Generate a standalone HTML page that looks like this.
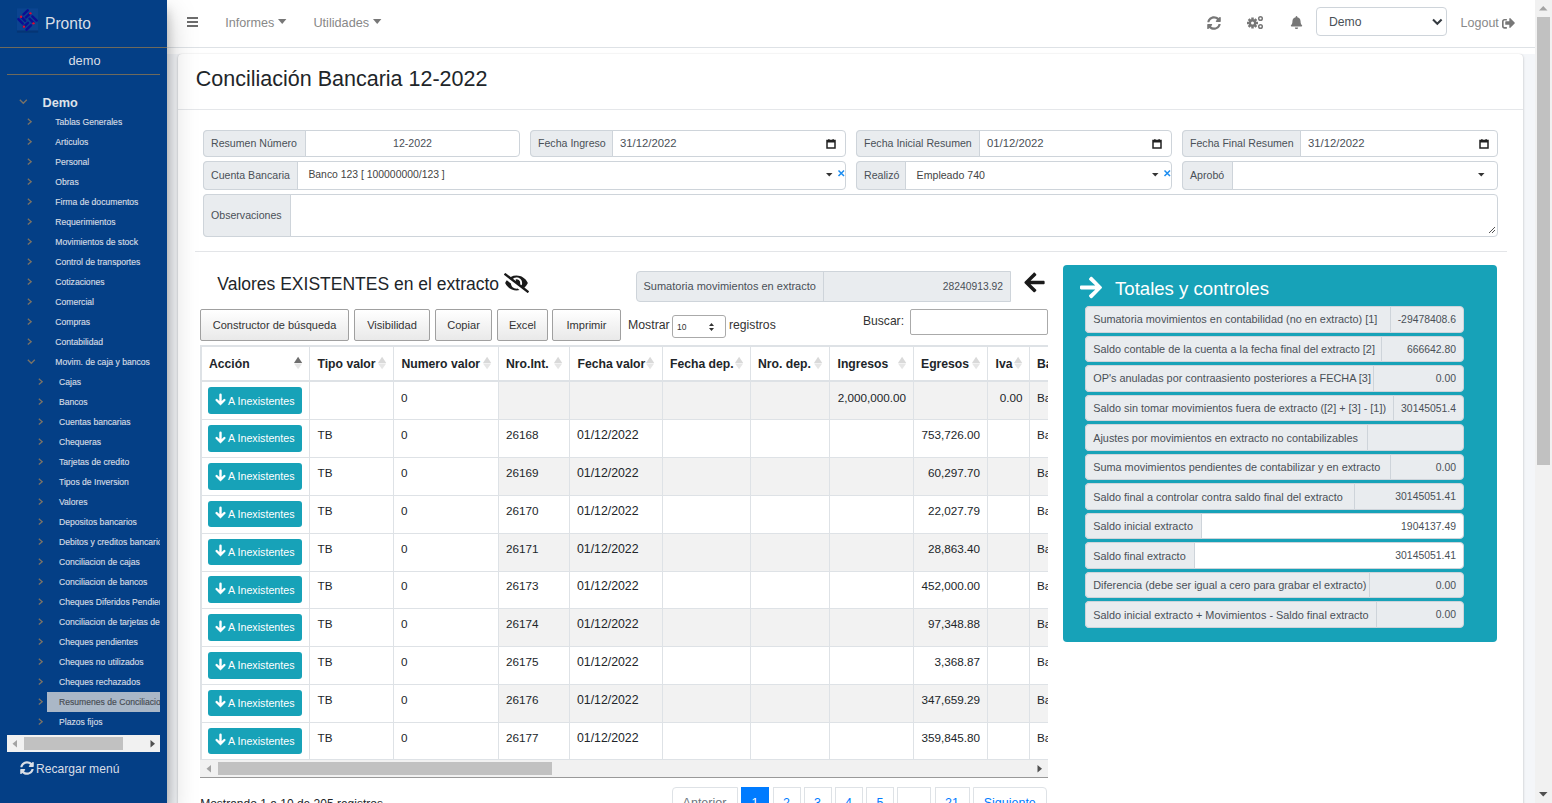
<!DOCTYPE html>
<html><head><meta charset="utf-8"><title>Conciliación Bancaria</title>
<style>
html,body{margin:0;padding:0;}
body{width:1552px;height:803px;overflow:hidden;position:relative;background:#f4f6f9;font-family:"Liberation Sans",sans-serif;}
.t{position:absolute;white-space:nowrap;}
.r{position:absolute;box-sizing:border-box;}
svg{position:absolute;overflow:visible;}
</style></head><body>

<div class="r" style="left:167px;top:0px;width:1368px;height:803px;background:#f4f6f9;"></div>
<div class="r" style="left:167px;top:0px;width:1368px;height:54px;background:#fff;"></div>
<div class="r" style="left:178px;top:54px;width:1345px;height:776px;background:#fff;border-radius:4px;box-shadow:0 0 1px rgba(0,0,0,.13),0 1px 3px rgba(0,0,0,.2);"></div>
<div class="r" style="left:178px;top:109px;width:1345px;height:1px;background:#e5e7ea;"></div>
<div class="r" style="left:167px;top:0px;width:1368px;height:48px;background:#fff;border-bottom:1px solid #dee2e6;"></div>
<div class="r" style="left:187px;top:17px;width:11px;height:2px;background:#6d6d6d;"></div>
<div class="r" style="left:187px;top:21px;width:11px;height:2px;background:#6d6d6d;"></div>
<div class="r" style="left:187px;top:25px;width:11px;height:2px;background:#6d6d6d;"></div>
<div class="t" style="top:12.54px;font-size:12.6px;line-height:20px;color:#888;left:225.30px;">Informes</div>
<svg style="left:278px;top:19px" width="9" height="6"><path d="M0 0H8.4L4.2 5z" fill="#777"/></svg>
<div class="t" style="top:12.55px;font-size:12.7px;line-height:20px;color:#888;left:313.40px;">Utilidades</div>
<svg style="left:373px;top:19px" width="9" height="6"><path d="M0 0H8.4L4.2 5z" fill="#777"/></svg>
<svg style="left:1207px;top:15.5px" width="14" height="14" viewBox="0 0 512 512"><path fill="#777" d="M370.72 133.28C339.458 104.008 298.888 87.962 255.848 88c-77.458.068-144.328 53.178-162.791 126.85-1.344 5.363-6.122 9.15-11.651 9.15H24.103c-7.498 0-13.194-6.807-11.807-14.176C33.933 94.924 134.813 8 256 8c66.448 0 126.791 26.136 171.315 68.685L463.03 40.97C478.149 25.851 504 36.559 504 57.941V192c0 13.255-10.745 24-24 24H345.941c-21.382 0-32.09-25.851-16.971-40.971l41.75-41.749zM32 296h134.059c21.382 0 32.09 25.851 16.971 40.971l-41.75 41.75c31.262 29.273 71.835 45.319 114.876 45.28 77.418-.07 144.315-53.144 162.787-126.849 1.344-5.363 6.122-9.15 11.651-9.15h57.304c7.498 0 13.194 6.807 11.807 14.176C478.067 417.076 377.187 504 256 504c-66.448 0-126.791-26.136-171.315-68.685L48.97 471.03C33.851 486.149 8 475.441 8 454.059V320c0-13.255 10.745-24 24-24z"/></svg>
<svg style="left:1247px;top:16px" width="17" height="13" viewBox="0 0 34 26"><g fill="#777"><circle cx="11" cy="14" r="7.5"/><g transform="translate(11 14)"><rect x="-2.5" y="-11" width="5" height="22"/><rect x="-2.5" y="-11" width="5" height="22" transform="rotate(45)"/><rect x="-2.5" y="-11" width="5" height="22" transform="rotate(90)"/><rect x="-2.5" y="-11" width="5" height="22" transform="rotate(135)"/></g></g><circle cx="11" cy="14" r="3" fill="#fff"/><circle cx="27" cy="5" r="3.6" fill="none" stroke="#777" stroke-width="3"/><circle cx="27" cy="21" r="3.6" fill="none" stroke="#777" stroke-width="3"/></svg>
<svg style="left:1290px;top:16px" width="13" height="13" viewBox="0 0 448 512"><path fill="#777" d="M224 512c35.32 0 63.97-28.65 63.97-64H160.03c0 35.35 28.65 64 63.97 64zm215.39-149.71c-19.32-20.76-55.47-51.99-55.47-154.29 0-77.7-54.48-139.9-127.94-155.16V32c0-17.67-14.32-32-31.98-32s-31.98 14.33-31.98 32v20.84C118.56 68.1 64.08 130.3 64.08 208c0 102.3-36.15 133.53-55.47 154.29-6 6.45-8.66 14.16-8.61 21.71.11 16.4 12.98 32 32.1 32h383.8c19.12 0 32-15.6 32.1-32 .05-7.55-2.61-15.27-8.61-21.71z"/></svg>
<div class="r" style="left:1316px;top:7px;width:131px;height:29px;background:#fff;border:1px solid #ced4da;border-radius:4px;"></div>
<div class="t" style="top:11.64px;font-size:12.2px;line-height:20px;color:#495057;left:1329.00px;">Demo</div>
<svg style="left:1432px;top:18px" width="11" height="8"><path d="M1 1.5L5.3 5.8L9.6 1.5" fill="none" stroke="#343a40" stroke-width="2"/></svg>
<div class="t" style="top:12.64px;font-size:12.5px;line-height:20px;color:#888;left:1460.60px;">Logout</div>
<svg style="left:1502px;top:16.5px" width="13" height="12" viewBox="0 0 512 448"><path fill="#777" d="M497 241L329 409c-15 15-41 4.5-41-17v-96H152c-13.3 0-24-10.7-24-24v-96c0-13.3 10.7-24 24-24h136V56c0-21.4 25.9-32 41-17l168 168c9.3 9.4 9.3 24.6 0 34zM192 436v-40c0-6.6-5.4-12-12-12H96c-17.7 0-32-14.3-32-32V160c0-17.7 14.3-32 32-32h84c6.6 0 12-5.4 12-12V76c0-6.6-5.4-12-12-12H96c-53 0-96 43-96 96v192c0 53 43 96 96 96h84c6.6 0 12-5.4 12-12z"/></svg>
<div class="t" style="top:69.35px;font-size:21.5px;line-height:20px;color:#212529;left:195.80px;">Conciliación Bancaria 12-2022</div>
<div class="r" style="left:203px;top:130px;width:317px;height:27px;background:#fff;border:1px solid #ced4da;border-radius:4px;"></div>
<div class="r" style="left:203px;top:130px;width:103px;height:27px;background:#e9ecef;border:1px solid #ced4da;border-radius:4px 0 0 4px;"></div>
<div class="t" style="top:132.62px;font-size:10.6px;line-height:20px;color:#495057;left:211.00px;">Resumen Número</div>
<div class="t" style="top:132.62px;font-size:10.6px;line-height:20px;color:#495057;left:212.50px;width:400px;text-align:center;">12-2022</div>
<div class="r" style="left:530px;top:130px;width:316px;height:27px;background:#fff;border:1px solid #ced4da;border-radius:4px;"></div>
<div class="r" style="left:530px;top:130px;width:83px;height:27px;background:#e9ecef;border:1px solid #ced4da;border-radius:4px 0 0 4px;"></div>
<div class="t" style="top:132.62px;font-size:10.6px;line-height:20px;color:#495057;left:538.00px;">Fecha Ingreso</div>
<div class="t" style="top:132.63px;font-size:11.3px;line-height:20px;color:#495057;left:620.00px;">31/12/2022</div>
<svg style="left:826px;top:138.5px" width="10" height="10" viewBox="0 0 10 10"><path d="M1 1.5h8v7.5h-8z" fill="none" stroke="#222" stroke-width="1.5"/><rect x="1" y="1" width="8" height="2.5" fill="#222"/><rect x="2.3" y="0" width="1.2" height="2" fill="#222"/><rect x="6.5" y="0" width="1.2" height="2" fill="#222"/></svg>
<div class="r" style="left:856px;top:130px;width:316px;height:27px;background:#fff;border:1px solid #ced4da;border-radius:4px;"></div>
<div class="r" style="left:856px;top:130px;width:124px;height:27px;background:#e9ecef;border:1px solid #ced4da;border-radius:4px 0 0 4px;"></div>
<div class="t" style="top:132.62px;font-size:10.6px;line-height:20px;color:#495057;left:864.00px;">Fecha Inicial Resumen</div>
<div class="t" style="top:132.63px;font-size:11.3px;line-height:20px;color:#495057;left:987.00px;">01/12/2022</div>
<svg style="left:1152px;top:138.5px" width="10" height="10" viewBox="0 0 10 10"><path d="M1 1.5h8v7.5h-8z" fill="none" stroke="#222" stroke-width="1.5"/><rect x="1" y="1" width="8" height="2.5" fill="#222"/><rect x="2.3" y="0" width="1.2" height="2" fill="#222"/><rect x="6.5" y="0" width="1.2" height="2" fill="#222"/></svg>
<div class="r" style="left:1182px;top:130px;width:316px;height:27px;background:#fff;border:1px solid #ced4da;border-radius:4px;"></div>
<div class="r" style="left:1182px;top:130px;width:119px;height:27px;background:#e9ecef;border:1px solid #ced4da;border-radius:4px 0 0 4px;"></div>
<div class="t" style="top:132.62px;font-size:10.6px;line-height:20px;color:#495057;left:1190.00px;">Fecha Final Resumen</div>
<div class="t" style="top:132.63px;font-size:11.3px;line-height:20px;color:#495057;left:1308.00px;">31/12/2022</div>
<svg style="left:1479px;top:138.5px" width="10" height="10" viewBox="0 0 10 10"><path d="M1 1.5h8v7.5h-8z" fill="none" stroke="#222" stroke-width="1.5"/><rect x="1" y="1" width="8" height="2.5" fill="#222"/><rect x="2.3" y="0" width="1.2" height="2" fill="#222"/><rect x="6.5" y="0" width="1.2" height="2" fill="#222"/></svg>
<div class="r" style="left:203px;top:161px;width:643px;height:29px;background:#fff;border:1px solid #ced4da;border-radius:4px;"></div>
<div class="r" style="left:203px;top:161px;width:95px;height:29px;background:#e9ecef;border:1px solid #ced4da;border-radius:4px 0 0 4px;"></div>
<div class="t" style="top:164.62px;font-size:10.6px;line-height:20px;color:#495057;left:211.00px;">Cuenta Bancaria</div>
<div class="t" style="top:164.62px;font-size:10.4px;line-height:20px;color:#444;left:308.40px;">Banco 123 [ 100000000/123 ]</div>
<svg style="left:826px;top:173px" width="7" height="4"><path d="M0 0H6.5L3.25 3.5z" fill="#333"/></svg>
<svg style="left:837.5px;top:170px" width="7" height="7"><path d="M.5 .5L6 6M6 .5L.5 6" stroke="#1a8cf0" stroke-width="1.5"/></svg>
<div class="r" style="left:856px;top:161px;width:316px;height:29px;background:#fff;border:1px solid #ced4da;border-radius:4px;"></div>
<div class="r" style="left:856px;top:161px;width:50px;height:29px;background:#e9ecef;border:1px solid #ced4da;border-radius:4px 0 0 4px;"></div>
<div class="t" style="top:164.62px;font-size:10.6px;line-height:20px;color:#495057;left:864.00px;">Realizó</div>
<div class="t" style="top:164.62px;font-size:10.6px;line-height:20px;color:#444;left:916.60px;">Empleado 740</div>
<svg style="left:1152px;top:173px" width="7" height="4"><path d="M0 0H6.5L3.25 3.5z" fill="#333"/></svg>
<svg style="left:1163.5px;top:170px" width="7" height="7"><path d="M.5 .5L6 6M6 .5L.5 6" stroke="#1a8cf0" stroke-width="1.5"/></svg>
<div class="r" style="left:1182px;top:161px;width:316px;height:29px;background:#fff;border:1px solid #ced4da;border-radius:4px;"></div>
<div class="r" style="left:1182px;top:161px;width:51px;height:29px;background:#e9ecef;border:1px solid #ced4da;border-radius:4px 0 0 4px;"></div>
<div class="t" style="top:164.62px;font-size:10.6px;line-height:20px;color:#495057;left:1190.00px;">Aprobó</div>
<svg style="left:1478px;top:173px" width="7" height="4"><path d="M0 0H6.5L3.25 3.5z" fill="#333"/></svg>
<div class="r" style="left:203px;top:194px;width:1295px;height:43px;background:#fff;border:1px solid #ced4da;border-radius:4px;"></div>
<div class="r" style="left:203px;top:194px;width:88px;height:43px;background:#e9ecef;border:1px solid #ced4da;border-radius:4px 0 0 4px;"></div>
<div class="t" style="top:204.62px;font-size:10.6px;line-height:20px;color:#495057;left:211.00px;">Observaciones</div>
<svg style="left:1488px;top:226px" width="8" height="8"><path d="M1 7L7 1M4 7L7 4" stroke="#555" stroke-width="1"/></svg>
<div class="r" style="left:195px;top:251px;width:1312px;height:1px;background:#e3e5e8;"></div>
<div class="t" style="top:273.60px;font-size:17.5px;line-height:20px;color:#212529;left:217.30px;">Valores EXISTENTES en el extracto</div>
<svg style="left:504px;top:272.6px" width="25" height="20" viewBox="0 0 640 512"><path fill="#1a1a1a" d="M320 400c-75.85 0-137.25-58.71-142.9-133.11L72.2 185.82c-13.79 17.3-26.48 35.59-36.72 55.59a32.35 32.35 0 0 0 0 29.19C89.71 376.41 197.07 448 320 448c26.91 0 52.87-4 77.89-10.46L346 397.39a144.13 144.13 0 0 1-26 2.61zm313.82 58.1l-110.55-85.44a331.25 331.25 0 0 0 81.25-102.07 32.35 32.35 0 0 0 0-29.19C550.29 135.59 442.93 64 320 64a308.15 308.15 0 0 0-147.32 37.7L45.46 3.37A16 16 0 0 0 23 6.18L3.37 31.45A16 16 0 0 0 6.18 53.9l588.36 454.73a16 16 0 0 0 22.46-2.81l19.64-25.27a16 16 0 0 0-2.82-22.45zm-183.72-142l-39.3-30.38A94.75 94.75 0 0 0 416 256a94.76 94.76 0 0 0-121.31-92.21A47.65 47.65 0 0 1 304 192a46.64 46.64 0 0 1-1.54 10l-73.61-56.89A142.31 142.31 0 0 1 320 112a143.92 143.92 0 0 1 144 144c0 21.63-5.29 41.79-13.9 60.11z"/></svg>
<div class="r" style="left:636px;top:271px;width:375px;height:31px;background:#e9ecef;border:1px solid #ced4da;border-radius:4px 0 0 4px;"></div>
<div class="r" style="left:823px;top:271px;width:1px;height:31px;background:#ced4da;"></div>
<div class="t" style="top:275.63px;font-size:11.0px;line-height:20px;color:#495057;left:643.50px;">Sumatoria movimientos en extracto</div>
<div class="t" style="top:276.62px;font-size:10.3px;line-height:20px;color:#495057;right:549.00px;text-align:right;">28240913.92</div>
<svg style="left:1024px;top:273px" width="21" height="19" viewBox="0 0 448 420"><path fill="#1a1a1a" d="M257.5 421.9l-22.2 22.2c-9.4 9.4-24.6 9.4-33.9 0L7 250.8c-9.4-9.4-9.4-24.6 0-33.9L201.4 22.4c9.4-9.4 24.6-9.4 33.9 0l22.2 22.2c9.5 9.5 9.3 25-.4 34.3L136.6 193.6H424c13.3 0 24 10.7 24 24v32c0 13.3-10.7 24-24 24H136.6l120.5 114.8c9.8 9.3 10 24.8.4 34.3z" transform="translate(0,-24)"/></svg>
<div class="r" style="left:200px;top:309px;width:149px;height:32px;background:linear-gradient(#fff,#e9e9e9);border:1px solid #a0a0a0;border-radius:2px;"></div>
<div class="t" style="top:315.13px;font-size:11.0px;line-height:20px;color:#333;left:74.50px;width:400px;text-align:center;">Constructor de búsqueda</div>
<div class="r" style="left:354px;top:309px;width:76px;height:32px;background:linear-gradient(#fff,#e9e9e9);border:1px solid #a0a0a0;border-radius:2px;"></div>
<div class="t" style="top:315.13px;font-size:11.1px;line-height:20px;color:#333;left:192.00px;width:400px;text-align:center;">Visibilidad</div>
<div class="r" style="left:435px;top:309px;width:57px;height:32px;background:linear-gradient(#fff,#e9e9e9);border:1px solid #a0a0a0;border-radius:2px;"></div>
<div class="t" style="top:315.13px;font-size:11.1px;line-height:20px;color:#333;left:263.50px;width:400px;text-align:center;">Copiar</div>
<div class="r" style="left:497px;top:309px;width:51px;height:32px;background:linear-gradient(#fff,#e9e9e9);border:1px solid #a0a0a0;border-radius:2px;"></div>
<div class="t" style="top:315.13px;font-size:11.1px;line-height:20px;color:#333;left:322.50px;width:400px;text-align:center;">Excel</div>
<div class="r" style="left:552px;top:309px;width:69px;height:32px;background:linear-gradient(#fff,#e9e9e9);border:1px solid #a0a0a0;border-radius:2px;"></div>
<div class="t" style="top:315.13px;font-size:11.1px;line-height:20px;color:#333;left:386.50px;width:400px;text-align:center;">Imprimir</div>
<div class="t" style="top:315.14px;font-size:12.3px;line-height:20px;color:#333;left:628.00px;">Mostrar</div>
<div class="r" style="left:672px;top:315px;width:54px;height:23px;background:#fff;border:1px solid #aaa;border-radius:3px;"></div>
<div class="t" style="top:317.10px;font-size:8.5px;line-height:20px;color:#333;left:677.00px;">10</div>
<svg style="left:709px;top:323px" width="5" height="9"><path d="M0 3L2.5 0L5 3zM0 5L2.5 8L5 5z" fill="#333"/></svg>
<div class="t" style="top:315.14px;font-size:12.2px;line-height:20px;color:#333;left:729.00px;">registros</div>
<div class="t" style="top:311.14px;font-size:12.1px;line-height:20px;color:#333;left:863.00px;">Buscar:</div>
<div class="r" style="left:910px;top:309px;width:138px;height:26px;background:#fff;border:1px solid #aaa;border-radius:2px;"></div>
<div style="position:absolute;left:200px;top:345px;width:848px;height:433px;overflow:hidden;">
<div class="r" style="left:0.00px;top:0.00px;width:900.00px;height:37.00px;background:#fff;"></div>
<div class="r" style="left:0.00px;top:0.00px;width:900.00px;height:2.00px;background:#dee2e6;"></div>
<div class="r" style="left:0.00px;top:35.00px;width:900.00px;height:2.00px;background:#dee2e6;"></div>
<div class="t" style="top:8.64px;font-size:12.2px;line-height:20px;color:#212529;font-weight:bold;left:9.00px;">Acción</div>
<svg style="left:94px;top:11px" width="9" height="14"><path d="M0 6.9L4.1 .8L8.2 6.9z" fill="#6e6e6e"/><path d="M0 7.4L8.2 7.4L4.1 13.3z" fill="#e6e6e6"/></svg>
<div class="t" style="top:8.64px;font-size:12.2px;line-height:20px;color:#212529;font-weight:bold;left:117.50px;">Tipo valor</div>
<svg style="left:178px;top:11px" width="9" height="14"><path d="M0 6.9L4.1 .8L8.2 6.9z" fill="#d9d9d9"/><path d="M0 7.4L8.2 7.4L4.1 13.3z" fill="#e6e6e6"/></svg>
<div class="t" style="top:8.64px;font-size:12.2px;line-height:20px;color:#212529;font-weight:bold;left:201.50px;">Numero valor</div>
<svg style="left:283px;top:11px" width="9" height="14"><path d="M0 6.9L4.1 .8L8.2 6.9z" fill="#d9d9d9"/><path d="M0 7.4L8.2 7.4L4.1 13.3z" fill="#e6e6e6"/></svg>
<div class="t" style="top:8.64px;font-size:12.2px;line-height:20px;color:#212529;font-weight:bold;left:306.00px;">Nro.Int.</div>
<svg style="left:354px;top:11px" width="9" height="14"><path d="M0 6.9L4.1 .8L8.2 6.9z" fill="#d9d9d9"/><path d="M0 7.4L8.2 7.4L4.1 13.3z" fill="#e6e6e6"/></svg>
<div class="t" style="top:8.64px;font-size:12.2px;line-height:20px;color:#212529;font-weight:bold;left:377.50px;">Fecha valor</div>
<svg style="left:446px;top:11px" width="9" height="14"><path d="M0 6.9L4.1 .8L8.2 6.9z" fill="#d9d9d9"/><path d="M0 7.4L8.2 7.4L4.1 13.3z" fill="#e6e6e6"/></svg>
<div class="t" style="top:8.64px;font-size:12.2px;line-height:20px;color:#212529;font-weight:bold;left:470.00px;">Fecha dep.</div>
<svg style="left:535px;top:11px" width="9" height="14"><path d="M0 6.9L4.1 .8L8.2 6.9z" fill="#d9d9d9"/><path d="M0 7.4L8.2 7.4L4.1 13.3z" fill="#e6e6e6"/></svg>
<div class="t" style="top:8.64px;font-size:12.2px;line-height:20px;color:#212529;font-weight:bold;left:558.00px;">Nro. dep.</div>
<svg style="left:614px;top:11px" width="9" height="14"><path d="M0 6.9L4.1 .8L8.2 6.9z" fill="#d9d9d9"/><path d="M0 7.4L8.2 7.4L4.1 13.3z" fill="#e6e6e6"/></svg>
<div class="t" style="top:8.64px;font-size:12.2px;line-height:20px;color:#212529;font-weight:bold;left:637.50px;">Ingresos</div>
<svg style="left:698px;top:11px" width="9" height="14"><path d="M0 6.9L4.1 .8L8.2 6.9z" fill="#d9d9d9"/><path d="M0 7.4L8.2 7.4L4.1 13.3z" fill="#e6e6e6"/></svg>
<div class="t" style="top:8.64px;font-size:12.2px;line-height:20px;color:#212529;font-weight:bold;left:721.00px;">Egresos</div>
<svg style="left:771.5px;top:11px" width="9" height="14"><path d="M0 6.9L4.1 .8L8.2 6.9z" fill="#d9d9d9"/><path d="M0 7.4L8.2 7.4L4.1 13.3z" fill="#e6e6e6"/></svg>
<div class="t" style="top:8.64px;font-size:12.2px;line-height:20px;color:#212529;font-weight:bold;left:795.50px;">Iva</div>
<svg style="left:814px;top:11px" width="9" height="14"><path d="M0 6.9L4.1 .8L8.2 6.9z" fill="#d9d9d9"/><path d="M0 7.4L8.2 7.4L4.1 13.3z" fill="#e6e6e6"/></svg>
<div class="t" style="top:8.64px;font-size:12.2px;line-height:20px;color:#212529;font-weight:bold;left:837.00px;">Banco</div>
<div class="r" style="left:0.00px;top:37.00px;width:900.00px;height:37.80px;background:#fff;"></div>
<div class="r" style="left:298.00px;top:37.00px;width:602.00px;height:37.80px;background:#f2f2f2;"></div>
<div class="r" style="left:8.00px;top:42.30px;width:94.00px;height:26.70px;background:#17a2b8;border-radius:3px;"></div>
<svg style="left:15px;top:49.00px" width="11" height="12" viewBox="0 0 11 12"><path d="M5.5 .8V9.8M1.6 6L5.5 9.9L9.4 6" fill="none" stroke="#fff" stroke-width="2.4" stroke-linecap="round" stroke-linejoin="miter"/></svg>
<div class="t" style="top:45.62px;font-size:10.7px;line-height:20px;color:#fff;left:28.00px;">A Inexistentes</div>
<div class="t" style="top:43.13px;font-size:11.7px;line-height:20px;color:#212529;left:201.00px;">0</div>
<div class="t" style="top:43.13px;font-size:11.7px;line-height:20px;color:#212529;left:406.00px;width:300px;text-align:right;">2,000,000.00</div>
<div class="t" style="top:43.13px;font-size:11.7px;line-height:20px;color:#212529;left:522.50px;width:300px;text-align:right;">0.00</div>
<div class="t" style="top:43.13px;font-size:11.7px;line-height:20px;color:#212529;left:837.00px;">Banco</div>
<div class="r" style="left:0.00px;top:74.80px;width:900.00px;height:37.80px;background:#fff;"></div>
<div class="r" style="left:0.00px;top:74.30px;width:900.00px;height:1.00px;background:#dee2e6;"></div>
<div class="r" style="left:8.00px;top:80.10px;width:94.00px;height:26.70px;background:#17a2b8;border-radius:3px;"></div>
<svg style="left:15px;top:86.80px" width="11" height="12" viewBox="0 0 11 12"><path d="M5.5 .8V9.8M1.6 6L5.5 9.9L9.4 6" fill="none" stroke="#fff" stroke-width="2.4" stroke-linecap="round" stroke-linejoin="miter"/></svg>
<div class="t" style="top:83.42px;font-size:10.7px;line-height:20px;color:#fff;left:28.00px;">A Inexistentes</div>
<div class="t" style="top:80.23px;font-size:11.7px;line-height:20px;color:#212529;left:117.50px;">TB</div>
<div class="t" style="top:80.23px;font-size:11.7px;line-height:20px;color:#212529;left:201.00px;">0</div>
<div class="t" style="top:80.23px;font-size:11.7px;line-height:20px;color:#212529;left:306.00px;">26168</div>
<div class="t" style="top:80.24px;font-size:12.3px;line-height:20px;color:#212529;left:377.00px;">01/12/2022</div>
<div class="t" style="top:80.23px;font-size:11.7px;line-height:20px;color:#212529;left:480.00px;width:300px;text-align:right;">753,726.00</div>
<div class="t" style="top:80.23px;font-size:11.7px;line-height:20px;color:#212529;left:837.00px;">Banco</div>
<div class="r" style="left:0.00px;top:112.60px;width:900.00px;height:37.80px;background:#fff;"></div>
<div class="r" style="left:298.00px;top:112.60px;width:602.00px;height:37.80px;background:#f2f2f2;"></div>
<div class="r" style="left:0.00px;top:112.10px;width:900.00px;height:1.00px;background:#dee2e6;"></div>
<div class="r" style="left:8.00px;top:117.90px;width:94.00px;height:26.70px;background:#17a2b8;border-radius:3px;"></div>
<svg style="left:15px;top:124.60px" width="11" height="12" viewBox="0 0 11 12"><path d="M5.5 .8V9.8M1.6 6L5.5 9.9L9.4 6" fill="none" stroke="#fff" stroke-width="2.4" stroke-linecap="round" stroke-linejoin="miter"/></svg>
<div class="t" style="top:121.22px;font-size:10.7px;line-height:20px;color:#fff;left:28.00px;">A Inexistentes</div>
<div class="t" style="top:118.03px;font-size:11.7px;line-height:20px;color:#212529;left:117.50px;">TB</div>
<div class="t" style="top:118.03px;font-size:11.7px;line-height:20px;color:#212529;left:201.00px;">0</div>
<div class="t" style="top:118.03px;font-size:11.7px;line-height:20px;color:#212529;left:306.00px;">26169</div>
<div class="t" style="top:118.04px;font-size:12.3px;line-height:20px;color:#212529;left:377.00px;">01/12/2022</div>
<div class="t" style="top:118.03px;font-size:11.7px;line-height:20px;color:#212529;left:480.00px;width:300px;text-align:right;">60,297.70</div>
<div class="t" style="top:118.03px;font-size:11.7px;line-height:20px;color:#212529;left:837.00px;">Banco</div>
<div class="r" style="left:0.00px;top:150.40px;width:900.00px;height:37.80px;background:#fff;"></div>
<div class="r" style="left:0.00px;top:149.90px;width:900.00px;height:1.00px;background:#dee2e6;"></div>
<div class="r" style="left:8.00px;top:155.70px;width:94.00px;height:26.70px;background:#17a2b8;border-radius:3px;"></div>
<svg style="left:15px;top:162.40px" width="11" height="12" viewBox="0 0 11 12"><path d="M5.5 .8V9.8M1.6 6L5.5 9.9L9.4 6" fill="none" stroke="#fff" stroke-width="2.4" stroke-linecap="round" stroke-linejoin="miter"/></svg>
<div class="t" style="top:159.02px;font-size:10.7px;line-height:20px;color:#fff;left:28.00px;">A Inexistentes</div>
<div class="t" style="top:155.83px;font-size:11.7px;line-height:20px;color:#212529;left:117.50px;">TB</div>
<div class="t" style="top:155.83px;font-size:11.7px;line-height:20px;color:#212529;left:201.00px;">0</div>
<div class="t" style="top:155.83px;font-size:11.7px;line-height:20px;color:#212529;left:306.00px;">26170</div>
<div class="t" style="top:155.84px;font-size:12.3px;line-height:20px;color:#212529;left:377.00px;">01/12/2022</div>
<div class="t" style="top:155.83px;font-size:11.7px;line-height:20px;color:#212529;left:480.00px;width:300px;text-align:right;">22,027.79</div>
<div class="t" style="top:155.83px;font-size:11.7px;line-height:20px;color:#212529;left:837.00px;">Banco</div>
<div class="r" style="left:0.00px;top:188.20px;width:900.00px;height:37.80px;background:#fff;"></div>
<div class="r" style="left:298.00px;top:188.20px;width:602.00px;height:37.80px;background:#f2f2f2;"></div>
<div class="r" style="left:0.00px;top:187.70px;width:900.00px;height:1.00px;background:#dee2e6;"></div>
<div class="r" style="left:8.00px;top:193.50px;width:94.00px;height:26.70px;background:#17a2b8;border-radius:3px;"></div>
<svg style="left:15px;top:200.20px" width="11" height="12" viewBox="0 0 11 12"><path d="M5.5 .8V9.8M1.6 6L5.5 9.9L9.4 6" fill="none" stroke="#fff" stroke-width="2.4" stroke-linecap="round" stroke-linejoin="miter"/></svg>
<div class="t" style="top:196.82px;font-size:10.7px;line-height:20px;color:#fff;left:28.00px;">A Inexistentes</div>
<div class="t" style="top:193.63px;font-size:11.7px;line-height:20px;color:#212529;left:117.50px;">TB</div>
<div class="t" style="top:193.63px;font-size:11.7px;line-height:20px;color:#212529;left:201.00px;">0</div>
<div class="t" style="top:193.63px;font-size:11.7px;line-height:20px;color:#212529;left:306.00px;">26171</div>
<div class="t" style="top:193.64px;font-size:12.3px;line-height:20px;color:#212529;left:377.00px;">01/12/2022</div>
<div class="t" style="top:193.63px;font-size:11.7px;line-height:20px;color:#212529;left:480.00px;width:300px;text-align:right;">28,863.40</div>
<div class="t" style="top:193.63px;font-size:11.7px;line-height:20px;color:#212529;left:837.00px;">Banco</div>
<div class="r" style="left:0.00px;top:226.00px;width:900.00px;height:37.80px;background:#fff;"></div>
<div class="r" style="left:0.00px;top:225.50px;width:900.00px;height:1.00px;background:#dee2e6;"></div>
<div class="r" style="left:8.00px;top:231.30px;width:94.00px;height:26.70px;background:#17a2b8;border-radius:3px;"></div>
<svg style="left:15px;top:238.00px" width="11" height="12" viewBox="0 0 11 12"><path d="M5.5 .8V9.8M1.6 6L5.5 9.9L9.4 6" fill="none" stroke="#fff" stroke-width="2.4" stroke-linecap="round" stroke-linejoin="miter"/></svg>
<div class="t" style="top:234.62px;font-size:10.7px;line-height:20px;color:#fff;left:28.00px;">A Inexistentes</div>
<div class="t" style="top:231.43px;font-size:11.7px;line-height:20px;color:#212529;left:117.50px;">TB</div>
<div class="t" style="top:231.43px;font-size:11.7px;line-height:20px;color:#212529;left:201.00px;">0</div>
<div class="t" style="top:231.43px;font-size:11.7px;line-height:20px;color:#212529;left:306.00px;">26173</div>
<div class="t" style="top:231.44px;font-size:12.3px;line-height:20px;color:#212529;left:377.00px;">01/12/2022</div>
<div class="t" style="top:231.43px;font-size:11.7px;line-height:20px;color:#212529;left:480.00px;width:300px;text-align:right;">452,000.00</div>
<div class="t" style="top:231.43px;font-size:11.7px;line-height:20px;color:#212529;left:837.00px;">Banco</div>
<div class="r" style="left:0.00px;top:263.80px;width:900.00px;height:37.80px;background:#fff;"></div>
<div class="r" style="left:298.00px;top:263.80px;width:602.00px;height:37.80px;background:#f2f2f2;"></div>
<div class="r" style="left:0.00px;top:263.30px;width:900.00px;height:1.00px;background:#dee2e6;"></div>
<div class="r" style="left:8.00px;top:269.10px;width:94.00px;height:26.70px;background:#17a2b8;border-radius:3px;"></div>
<svg style="left:15px;top:275.80px" width="11" height="12" viewBox="0 0 11 12"><path d="M5.5 .8V9.8M1.6 6L5.5 9.9L9.4 6" fill="none" stroke="#fff" stroke-width="2.4" stroke-linecap="round" stroke-linejoin="miter"/></svg>
<div class="t" style="top:272.42px;font-size:10.7px;line-height:20px;color:#fff;left:28.00px;">A Inexistentes</div>
<div class="t" style="top:269.23px;font-size:11.7px;line-height:20px;color:#212529;left:117.50px;">TB</div>
<div class="t" style="top:269.23px;font-size:11.7px;line-height:20px;color:#212529;left:201.00px;">0</div>
<div class="t" style="top:269.23px;font-size:11.7px;line-height:20px;color:#212529;left:306.00px;">26174</div>
<div class="t" style="top:269.24px;font-size:12.3px;line-height:20px;color:#212529;left:377.00px;">01/12/2022</div>
<div class="t" style="top:269.23px;font-size:11.7px;line-height:20px;color:#212529;left:480.00px;width:300px;text-align:right;">97,348.88</div>
<div class="t" style="top:269.23px;font-size:11.7px;line-height:20px;color:#212529;left:837.00px;">Banco</div>
<div class="r" style="left:0.00px;top:301.60px;width:900.00px;height:37.80px;background:#fff;"></div>
<div class="r" style="left:0.00px;top:301.10px;width:900.00px;height:1.00px;background:#dee2e6;"></div>
<div class="r" style="left:8.00px;top:306.90px;width:94.00px;height:26.70px;background:#17a2b8;border-radius:3px;"></div>
<svg style="left:15px;top:313.60px" width="11" height="12" viewBox="0 0 11 12"><path d="M5.5 .8V9.8M1.6 6L5.5 9.9L9.4 6" fill="none" stroke="#fff" stroke-width="2.4" stroke-linecap="round" stroke-linejoin="miter"/></svg>
<div class="t" style="top:310.22px;font-size:10.7px;line-height:20px;color:#fff;left:28.00px;">A Inexistentes</div>
<div class="t" style="top:307.03px;font-size:11.7px;line-height:20px;color:#212529;left:117.50px;">TB</div>
<div class="t" style="top:307.03px;font-size:11.7px;line-height:20px;color:#212529;left:201.00px;">0</div>
<div class="t" style="top:307.03px;font-size:11.7px;line-height:20px;color:#212529;left:306.00px;">26175</div>
<div class="t" style="top:307.04px;font-size:12.3px;line-height:20px;color:#212529;left:377.00px;">01/12/2022</div>
<div class="t" style="top:307.03px;font-size:11.7px;line-height:20px;color:#212529;left:480.00px;width:300px;text-align:right;">3,368.87</div>
<div class="t" style="top:307.03px;font-size:11.7px;line-height:20px;color:#212529;left:837.00px;">Banco</div>
<div class="r" style="left:0.00px;top:339.40px;width:900.00px;height:37.80px;background:#fff;"></div>
<div class="r" style="left:298.00px;top:339.40px;width:602.00px;height:37.80px;background:#f2f2f2;"></div>
<div class="r" style="left:0.00px;top:338.90px;width:900.00px;height:1.00px;background:#dee2e6;"></div>
<div class="r" style="left:8.00px;top:344.70px;width:94.00px;height:26.70px;background:#17a2b8;border-radius:3px;"></div>
<svg style="left:15px;top:351.40px" width="11" height="12" viewBox="0 0 11 12"><path d="M5.5 .8V9.8M1.6 6L5.5 9.9L9.4 6" fill="none" stroke="#fff" stroke-width="2.4" stroke-linecap="round" stroke-linejoin="miter"/></svg>
<div class="t" style="top:348.02px;font-size:10.7px;line-height:20px;color:#fff;left:28.00px;">A Inexistentes</div>
<div class="t" style="top:344.83px;font-size:11.7px;line-height:20px;color:#212529;left:117.50px;">TB</div>
<div class="t" style="top:344.83px;font-size:11.7px;line-height:20px;color:#212529;left:201.00px;">0</div>
<div class="t" style="top:344.83px;font-size:11.7px;line-height:20px;color:#212529;left:306.00px;">26176</div>
<div class="t" style="top:344.84px;font-size:12.3px;line-height:20px;color:#212529;left:377.00px;">01/12/2022</div>
<div class="t" style="top:344.83px;font-size:11.7px;line-height:20px;color:#212529;left:480.00px;width:300px;text-align:right;">347,659.29</div>
<div class="t" style="top:344.83px;font-size:11.7px;line-height:20px;color:#212529;left:837.00px;">Banco</div>
<div class="r" style="left:0.00px;top:377.20px;width:900.00px;height:37.80px;background:#fff;"></div>
<div class="r" style="left:0.00px;top:376.70px;width:900.00px;height:1.00px;background:#dee2e6;"></div>
<div class="r" style="left:8.00px;top:382.50px;width:94.00px;height:26.70px;background:#17a2b8;border-radius:3px;"></div>
<svg style="left:15px;top:389.20px" width="11" height="12" viewBox="0 0 11 12"><path d="M5.5 .8V9.8M1.6 6L5.5 9.9L9.4 6" fill="none" stroke="#fff" stroke-width="2.4" stroke-linecap="round" stroke-linejoin="miter"/></svg>
<div class="t" style="top:385.82px;font-size:10.7px;line-height:20px;color:#fff;left:28.00px;">A Inexistentes</div>
<div class="t" style="top:382.63px;font-size:11.7px;line-height:20px;color:#212529;left:117.50px;">TB</div>
<div class="t" style="top:382.63px;font-size:11.7px;line-height:20px;color:#212529;left:201.00px;">0</div>
<div class="t" style="top:382.63px;font-size:11.7px;line-height:20px;color:#212529;left:306.00px;">26177</div>
<div class="t" style="top:382.64px;font-size:12.3px;line-height:20px;color:#212529;left:377.00px;">01/12/2022</div>
<div class="t" style="top:382.63px;font-size:11.7px;line-height:20px;color:#212529;left:480.00px;width:300px;text-align:right;">359,845.80</div>
<div class="t" style="top:382.63px;font-size:11.7px;line-height:20px;color:#212529;left:837.00px;">Banco</div>
<div class="r" style="left:0.50px;top:0.00px;width:1.00px;height:415.00px;background:#dee2e6;"></div>
<div class="r" style="left:109.00px;top:0.00px;width:1.00px;height:415.00px;background:#dee2e6;"></div>
<div class="r" style="left:193.00px;top:0.00px;width:1.00px;height:415.00px;background:#dee2e6;"></div>
<div class="r" style="left:297.50px;top:0.00px;width:1.00px;height:415.00px;background:#dee2e6;"></div>
<div class="r" style="left:369.00px;top:0.00px;width:1.00px;height:415.00px;background:#dee2e6;"></div>
<div class="r" style="left:461.50px;top:0.00px;width:1.00px;height:415.00px;background:#dee2e6;"></div>
<div class="r" style="left:549.50px;top:0.00px;width:1.00px;height:415.00px;background:#dee2e6;"></div>
<div class="r" style="left:629.00px;top:0.00px;width:1.00px;height:415.00px;background:#dee2e6;"></div>
<div class="r" style="left:712.50px;top:0.00px;width:1.00px;height:415.00px;background:#dee2e6;"></div>
<div class="r" style="left:787.00px;top:0.00px;width:1.00px;height:415.00px;background:#dee2e6;"></div>
<div class="r" style="left:828.50px;top:0.00px;width:1.00px;height:415.00px;background:#dee2e6;"></div>
<div class="r" style="left:0.00px;top:0.00px;width:2.00px;height:415.00px;background:#dee2e6;"></div>
<div class="r" style="left:0.00px;top:414.00px;width:900.00px;height:1.00px;background:#dee2e6;"></div>
<div class="r" style="left:0.00px;top:415.00px;width:848.00px;height:17.00px;background:#f1f1f1;"></div>
<div class="r" style="left:18.00px;top:417.00px;width:334.00px;height:13.00px;background:#c1c1c1;"></div>
<svg style="left:6px;top:420px" width="6" height="8"><path d="M5 0V7.5L0.5 3.75z" fill="#a3a3a3"/></svg>
<svg style="left:837px;top:420px" width="6" height="8"><path d="M0.5 0V7.5L5 3.75z" fill="#505050"/></svg>
<div class="r" style="left:0.00px;top:431.50px;width:848.00px;height:1.50px;background:#999;"></div>
</div>
<div class="t" style="top:793.64px;font-size:12.0px;line-height:20px;color:#212529;left:200.20px;">Mostrando 1 a 10 de 205 registros</div>
<div class="r" style="left:671.5px;top:787px;width:66.0px;height:43px;background:#fff;border:1px solid #dee2e6;border-radius:4px 0 0 4px;"></div>
<div class="t" style="top:792.94px;font-size:12.5px;line-height:20px;color:#6c757d;left:504.50px;width:400px;text-align:center;">Anterior</div>
<div class="r" style="left:741px;top:787px;width:28px;height:43px;background:#007bff;border:1px solid #007bff;"></div>
<div class="t" style="top:792.94px;font-size:12.5px;line-height:20px;color:#fff;left:555.00px;width:400px;text-align:center;">1</div>
<div class="r" style="left:772.5px;top:787px;width:28.0px;height:43px;background:#fff;border:1px solid #dee2e6;"></div>
<div class="t" style="top:792.94px;font-size:12.5px;line-height:20px;color:#007bff;left:586.50px;width:400px;text-align:center;">2</div>
<div class="r" style="left:803.5px;top:787px;width:28.0px;height:43px;background:#fff;border:1px solid #dee2e6;"></div>
<div class="t" style="top:792.94px;font-size:12.5px;line-height:20px;color:#007bff;left:617.50px;width:400px;text-align:center;">3</div>
<div class="r" style="left:834.5px;top:787px;width:28.0px;height:43px;background:#fff;border:1px solid #dee2e6;"></div>
<div class="t" style="top:792.94px;font-size:12.5px;line-height:20px;color:#007bff;left:648.50px;width:400px;text-align:center;">4</div>
<div class="r" style="left:866px;top:787px;width:28px;height:43px;background:#fff;border:1px solid #dee2e6;"></div>
<div class="t" style="top:792.94px;font-size:12.5px;line-height:20px;color:#007bff;left:680.00px;width:400px;text-align:center;">5</div>
<div class="r" style="left:897px;top:787px;width:34px;height:43px;background:#fff;border:1px solid #dee2e6;"></div>
<div class="t" style="top:792.94px;font-size:12.5px;line-height:20px;color:#6c757d;left:714.00px;width:400px;text-align:center;">…</div>
<div class="r" style="left:934.5px;top:787px;width:35.0px;height:43px;background:#fff;border:1px solid #dee2e6;"></div>
<div class="t" style="top:792.94px;font-size:12.5px;line-height:20px;color:#007bff;left:752.00px;width:400px;text-align:center;">21</div>
<div class="r" style="left:972.5px;top:787px;width:74.5px;height:43px;background:#fff;border:1px solid #dee2e6;border-radius:0 4px 4px 0;"></div>
<div class="t" style="top:792.94px;font-size:12.5px;line-height:20px;color:#007bff;left:809.75px;width:400px;text-align:center;">Siguiente</div>
<div class="r" style="left:1063px;top:265px;width:434px;height:377px;background:#17a2b8;border-radius:4px;"></div>
<svg style="left:1080px;top:277px" width="22" height="21" viewBox="0 0 448 420"><path fill="#fff" d="M190.5 66.9l22.2-22.2c9.4-9.4 24.6-9.4 33.9 0L441 239c9.4 9.4 9.4 24.6 0 33.9L246.6 467.3c-9.4 9.4-24.6 9.4-33.9 0l-22.2-22.2c-9.5-9.5-9.3-25 .4-34.3L311.4 296H24c-13.3 0-24-10.7-24-24v-32c0-13.3 10.7-24 24-24h287.4L190.9 101.2c-9.8-9.3-10-24.8-.4-34.3z" transform="translate(0,-46)"/></svg>
<div class="t" style="top:278.51px;font-size:18.6px;line-height:20px;color:#fff;left:1115.00px;">Totales y controles</div>
<div class="r" style="left:1085px;top:306.0px;width:379px;height:26.5px;background:#e9ecef;border:1px solid #ced4da;border-radius:4px;"></div>
<div class="r" style="left:1085px;top:306.0px;width:305.5px;height:26.5px;background:#e9ecef;border:1px solid #ced4da;border-radius:4px 0 0 4px;"></div>
<div class="t" style="top:309.38px;font-size:10.88px;line-height:20px;color:#495057;left:1093.20px;">Sumatoria movimientos en contabilidad (no en extracto) [1]</div>
<div class="t" style="top:310.07px;font-size:10.4px;line-height:20px;color:#495057;right:96.00px;text-align:right;">-29478408.6</div>
<div class="r" style="left:1085px;top:335.53px;width:379px;height:26.5px;background:#e9ecef;border:1px solid #ced4da;border-radius:4px;"></div>
<div class="r" style="left:1085px;top:335.53px;width:297px;height:26.5px;background:#e9ecef;border:1px solid #ced4da;border-radius:4px 0 0 4px;"></div>
<div class="t" style="top:338.91px;font-size:10.88px;line-height:20px;color:#495057;left:1093.20px;">Saldo contable de la cuenta a la fecha final del extracto [2]</div>
<div class="t" style="top:339.60px;font-size:10.4px;line-height:20px;color:#495057;right:96.00px;text-align:right;">666642.80</div>
<div class="r" style="left:1085px;top:365.06px;width:379px;height:26.5px;background:#e9ecef;border:1px solid #ced4da;border-radius:4px;"></div>
<div class="r" style="left:1085px;top:365.06px;width:289px;height:26.5px;background:#e9ecef;border:1px solid #ced4da;border-radius:4px 0 0 4px;"></div>
<div class="t" style="top:368.44px;font-size:10.88px;line-height:20px;color:#495057;left:1093.20px;">OP's anuladas por contraasiento posteriores a FECHA [3]</div>
<div class="t" style="top:369.13px;font-size:10.4px;line-height:20px;color:#495057;right:96.00px;text-align:right;">0.00</div>
<div class="r" style="left:1085px;top:394.59px;width:379px;height:26.5px;background:#e9ecef;border:1px solid #ced4da;border-radius:4px;"></div>
<div class="r" style="left:1085px;top:394.59px;width:309px;height:26.5px;background:#e9ecef;border:1px solid #ced4da;border-radius:4px 0 0 4px;"></div>
<div class="t" style="top:397.97px;font-size:10.88px;line-height:20px;color:#495057;left:1093.20px;">Saldo sin tomar movimientos fuera de extracto ([2] + [3] - [1])</div>
<div class="t" style="top:398.66px;font-size:10.4px;line-height:20px;color:#495057;right:96.00px;text-align:right;">30145051.4</div>
<div class="r" style="left:1085px;top:424.12px;width:379px;height:26.5px;background:#e9ecef;border:1px solid #ced4da;border-radius:4px;"></div>
<div class="r" style="left:1085px;top:424.12px;width:283px;height:26.5px;background:#e9ecef;border:1px solid #ced4da;border-radius:4px 0 0 4px;"></div>
<div class="t" style="top:427.50px;font-size:10.88px;line-height:20px;color:#495057;left:1093.20px;">Ajustes por movimientos en extracto no contabilizables</div>
<div class="r" style="left:1085px;top:453.65px;width:379px;height:26.5px;background:#e9ecef;border:1px solid #ced4da;border-radius:4px;"></div>
<div class="r" style="left:1085px;top:453.65px;width:305.5px;height:26.5px;background:#e9ecef;border:1px solid #ced4da;border-radius:4px 0 0 4px;"></div>
<div class="t" style="top:457.03px;font-size:10.88px;line-height:20px;color:#495057;left:1093.20px;">Suma movimientos pendientes de contabilizar y en extracto</div>
<div class="t" style="top:457.72px;font-size:10.4px;line-height:20px;color:#495057;right:96.00px;text-align:right;">0.00</div>
<div class="r" style="left:1085px;top:483.18px;width:379px;height:26.5px;background:#e9ecef;border:1px solid #ced4da;border-radius:4px;"></div>
<div class="r" style="left:1085px;top:483.18px;width:269.5px;height:26.5px;background:#e9ecef;border:1px solid #ced4da;border-radius:4px 0 0 4px;"></div>
<div class="t" style="top:486.56px;font-size:10.88px;line-height:20px;color:#495057;left:1093.20px;">Saldo final a controlar contra saldo final del extracto</div>
<div class="t" style="top:487.25px;font-size:10.4px;line-height:20px;color:#495057;right:96.00px;text-align:right;">30145051.41</div>
<div class="r" style="left:1085px;top:512.71px;width:379px;height:26.5px;background:#fff;border:1px solid #ced4da;border-radius:4px;"></div>
<div class="r" style="left:1085px;top:512.71px;width:117px;height:26.5px;background:#e9ecef;border:1px solid #ced4da;border-radius:4px 0 0 4px;"></div>
<div class="t" style="top:516.09px;font-size:10.88px;line-height:20px;color:#495057;left:1093.20px;">Saldo inicial extracto</div>
<div class="t" style="top:516.78px;font-size:10.4px;line-height:20px;color:#495057;right:96.00px;text-align:right;">1904137.49</div>
<div class="r" style="left:1085px;top:542.24px;width:379px;height:26.5px;background:#fff;border:1px solid #ced4da;border-radius:4px;"></div>
<div class="r" style="left:1085px;top:542.24px;width:110px;height:26.5px;background:#e9ecef;border:1px solid #ced4da;border-radius:4px 0 0 4px;"></div>
<div class="t" style="top:545.62px;font-size:10.88px;line-height:20px;color:#495057;left:1093.20px;">Saldo final extracto</div>
<div class="t" style="top:546.31px;font-size:10.4px;line-height:20px;color:#495057;right:96.00px;text-align:right;">30145051.41</div>
<div class="r" style="left:1085px;top:571.77px;width:379px;height:26.5px;background:#e9ecef;border:1px solid #ced4da;border-radius:4px;"></div>
<div class="r" style="left:1085px;top:571.77px;width:285px;height:26.5px;background:#e9ecef;border:1px solid #ced4da;border-radius:4px 0 0 4px;"></div>
<div class="t" style="top:575.15px;font-size:10.88px;line-height:20px;color:#495057;left:1093.20px;">Diferencia (debe ser igual a cero para grabar el extracto)</div>
<div class="t" style="top:575.84px;font-size:10.4px;line-height:20px;color:#495057;right:96.00px;text-align:right;">0.00</div>
<div class="r" style="left:1085px;top:601.3px;width:379px;height:26.5px;background:#e9ecef;border:1px solid #ced4da;border-radius:4px;"></div>
<div class="r" style="left:1085px;top:601.3px;width:292px;height:26.5px;background:#e9ecef;border:1px solid #ced4da;border-radius:4px 0 0 4px;"></div>
<div class="t" style="top:604.68px;font-size:10.88px;line-height:20px;color:#495057;left:1093.20px;">Saldo inicial extracto + Movimientos - Saldo final extracto</div>
<div class="t" style="top:605.37px;font-size:10.4px;line-height:20px;color:#495057;right:96.00px;text-align:right;">0.00</div>
<div class="r" style="left:1535px;top:0px;width:17px;height:803px;background:#f1f1f1;"></div>
<div class="r" style="left:1537px;top:17px;width:13px;height:448px;background:#c1c1c1;"></div>
<svg style="left:1539px;top:6px" width="9" height="5"><path d="M0 4.5H8.5L4.25 0z" fill="#a3a3a3"/></svg>
<svg style="left:1539px;top:792px" width="9" height="5"><path d="M0 0H8.5L4.25 4.5z" fill="#505050"/></svg>
<div class="r" style="left:0px;top:0px;width:167px;height:803px;background:#043f86;box-shadow:0 14px 28px rgba(0,0,0,.25),0 10px 10px rgba(0,0,0,.22);"></div>
<svg style="left:12px;top:4px" width="32" height="32" viewBox="0 0 803 803">
<rect x="125" y="110" width="530" height="570" fill="#0b4490"/>
<rect x="125" y="660" width="530" height="60" fill="#06316a" opacity="0.6"/>
<g stroke="#0c0f92" stroke-width="62" stroke-linecap="round">
<path d="M395 160L290 260M455 240L350 335M510 310L620 415M440 370L545 480M160 380L270 490M235 325L330 425M400 475L295 570M475 535L365 645"/>
</g>
<g fill="#e01030"><circle cx="462" cy="235" r="30"/><circle cx="228" cy="320" r="30"/><circle cx="540" cy="485" r="30"/><circle cx="300" cy="568" r="30"/></g>
</svg>
<div class="t" style="top:13.68px;font-size:15.6px;line-height:20px;color:#d9dee6;left:45.00px;">Pronto</div>
<div class="r" style="left:0px;top:47px;width:167px;height:1px;background:#6f6a5c;"></div>
<div class="t" style="top:51.15px;font-size:12.8px;line-height:20px;color:#d9dee6;left:-115.50px;width:400px;text-align:center;">demo</div>
<div class="r" style="left:7px;top:74px;width:153px;height:1px;background:#6f6a5c;"></div>
<div class="t" style="top:92.65px;font-size:12.7px;line-height:20px;color:#dde2ea;font-weight:bold;left:42.60px;">Demo</div>
<svg style="left:19px;top:99px" width="9" height="6"><path d="M.8 .8L4.3 4.3L7.8 .8" fill="none" stroke="#7a7266" stroke-width="1.3"/></svg>
<div style="position:absolute;left:0;top:0;width:160px;height:803px;overflow:hidden;">
<div class="t" style="top:112.00px;font-size:8.6px;line-height:20px;color:#d5dbe3;left:55.30px;-webkit-text-stroke:0.15px #d5dbe3;">Tablas Generales</div>
<svg style="left:27.0px;top:118.4px" width="6" height="8"><path d="M.8 .8L4.2 3.7L.8 6.6" fill="none" stroke="#7a7266" stroke-width="1.3"/></svg>
<div class="t" style="top:132.00px;font-size:8.6px;line-height:20px;color:#d5dbe3;left:55.30px;-webkit-text-stroke:0.15px #d5dbe3;">Articulos</div>
<svg style="left:27.0px;top:138.4px" width="6" height="8"><path d="M.8 .8L4.2 3.7L.8 6.6" fill="none" stroke="#7a7266" stroke-width="1.3"/></svg>
<div class="t" style="top:152.00px;font-size:8.6px;line-height:20px;color:#d5dbe3;left:55.30px;-webkit-text-stroke:0.15px #d5dbe3;">Personal</div>
<svg style="left:27.0px;top:158.4px" width="6" height="8"><path d="M.8 .8L4.2 3.7L.8 6.6" fill="none" stroke="#7a7266" stroke-width="1.3"/></svg>
<div class="t" style="top:172.00px;font-size:8.6px;line-height:20px;color:#d5dbe3;left:55.30px;-webkit-text-stroke:0.15px #d5dbe3;">Obras</div>
<svg style="left:27.0px;top:178.4px" width="6" height="8"><path d="M.8 .8L4.2 3.7L.8 6.6" fill="none" stroke="#7a7266" stroke-width="1.3"/></svg>
<div class="t" style="top:192.00px;font-size:8.6px;line-height:20px;color:#d5dbe3;left:55.30px;-webkit-text-stroke:0.15px #d5dbe3;">Firma de documentos</div>
<svg style="left:27.0px;top:198.4px" width="6" height="8"><path d="M.8 .8L4.2 3.7L.8 6.6" fill="none" stroke="#7a7266" stroke-width="1.3"/></svg>
<div class="t" style="top:212.00px;font-size:8.6px;line-height:20px;color:#d5dbe3;left:55.30px;-webkit-text-stroke:0.15px #d5dbe3;">Requerimientos</div>
<svg style="left:27.0px;top:218.4px" width="6" height="8"><path d="M.8 .8L4.2 3.7L.8 6.6" fill="none" stroke="#7a7266" stroke-width="1.3"/></svg>
<div class="t" style="top:232.00px;font-size:8.6px;line-height:20px;color:#d5dbe3;left:55.30px;-webkit-text-stroke:0.15px #d5dbe3;">Movimientos de stock</div>
<svg style="left:27.0px;top:238.4px" width="6" height="8"><path d="M.8 .8L4.2 3.7L.8 6.6" fill="none" stroke="#7a7266" stroke-width="1.3"/></svg>
<div class="t" style="top:252.00px;font-size:8.6px;line-height:20px;color:#d5dbe3;left:55.30px;-webkit-text-stroke:0.15px #d5dbe3;">Control de transportes</div>
<svg style="left:27.0px;top:258.4px" width="6" height="8"><path d="M.8 .8L4.2 3.7L.8 6.6" fill="none" stroke="#7a7266" stroke-width="1.3"/></svg>
<div class="t" style="top:272.00px;font-size:8.6px;line-height:20px;color:#d5dbe3;left:55.30px;-webkit-text-stroke:0.15px #d5dbe3;">Cotizaciones</div>
<svg style="left:27.0px;top:278.4px" width="6" height="8"><path d="M.8 .8L4.2 3.7L.8 6.6" fill="none" stroke="#7a7266" stroke-width="1.3"/></svg>
<div class="t" style="top:292.00px;font-size:8.6px;line-height:20px;color:#d5dbe3;left:55.30px;-webkit-text-stroke:0.15px #d5dbe3;">Comercial</div>
<svg style="left:27.0px;top:298.4px" width="6" height="8"><path d="M.8 .8L4.2 3.7L.8 6.6" fill="none" stroke="#7a7266" stroke-width="1.3"/></svg>
<div class="t" style="top:312.00px;font-size:8.6px;line-height:20px;color:#d5dbe3;left:55.30px;-webkit-text-stroke:0.15px #d5dbe3;">Compras</div>
<svg style="left:27.0px;top:318.4px" width="6" height="8"><path d="M.8 .8L4.2 3.7L.8 6.6" fill="none" stroke="#7a7266" stroke-width="1.3"/></svg>
<div class="t" style="top:332.00px;font-size:8.6px;line-height:20px;color:#d5dbe3;left:55.30px;-webkit-text-stroke:0.15px #d5dbe3;">Contabilidad</div>
<svg style="left:27.0px;top:338.4px" width="6" height="8"><path d="M.8 .8L4.2 3.7L.8 6.6" fill="none" stroke="#7a7266" stroke-width="1.3"/></svg>
<div class="t" style="top:352.00px;font-size:8.6px;line-height:20px;color:#d5dbe3;left:55.30px;-webkit-text-stroke:0.15px #d5dbe3;">Movim. de caja y bancos</div>
<svg style="left:27px;top:359.4px" width="9" height="6"><path d="M.8 .8L4.3 4.3L7.8 .8" fill="none" stroke="#7a7266" stroke-width="1.3"/></svg>
<div class="t" style="top:372.00px;font-size:8.6px;line-height:20px;color:#d5dbe3;left:59.00px;-webkit-text-stroke:0.15px #d5dbe3;">Cajas</div>
<svg style="left:37.5px;top:378.4px" width="6" height="8"><path d="M.8 .8L4.2 3.7L.8 6.6" fill="none" stroke="#7a7266" stroke-width="1.3"/></svg>
<div class="t" style="top:392.00px;font-size:8.6px;line-height:20px;color:#d5dbe3;left:59.00px;-webkit-text-stroke:0.15px #d5dbe3;">Bancos</div>
<svg style="left:37.5px;top:398.4px" width="6" height="8"><path d="M.8 .8L4.2 3.7L.8 6.6" fill="none" stroke="#7a7266" stroke-width="1.3"/></svg>
<div class="t" style="top:412.00px;font-size:8.6px;line-height:20px;color:#d5dbe3;left:59.00px;-webkit-text-stroke:0.15px #d5dbe3;">Cuentas bancarias</div>
<svg style="left:37.5px;top:418.4px" width="6" height="8"><path d="M.8 .8L4.2 3.7L.8 6.6" fill="none" stroke="#7a7266" stroke-width="1.3"/></svg>
<div class="t" style="top:432.00px;font-size:8.6px;line-height:20px;color:#d5dbe3;left:59.00px;-webkit-text-stroke:0.15px #d5dbe3;">Chequeras</div>
<svg style="left:37.5px;top:438.4px" width="6" height="8"><path d="M.8 .8L4.2 3.7L.8 6.6" fill="none" stroke="#7a7266" stroke-width="1.3"/></svg>
<div class="t" style="top:452.00px;font-size:8.6px;line-height:20px;color:#d5dbe3;left:59.00px;-webkit-text-stroke:0.15px #d5dbe3;">Tarjetas de credito</div>
<svg style="left:37.5px;top:458.4px" width="6" height="8"><path d="M.8 .8L4.2 3.7L.8 6.6" fill="none" stroke="#7a7266" stroke-width="1.3"/></svg>
<div class="t" style="top:472.00px;font-size:8.6px;line-height:20px;color:#d5dbe3;left:59.00px;-webkit-text-stroke:0.15px #d5dbe3;">Tipos de Inversion</div>
<svg style="left:37.5px;top:478.4px" width="6" height="8"><path d="M.8 .8L4.2 3.7L.8 6.6" fill="none" stroke="#7a7266" stroke-width="1.3"/></svg>
<div class="t" style="top:492.00px;font-size:8.6px;line-height:20px;color:#d5dbe3;left:59.00px;-webkit-text-stroke:0.15px #d5dbe3;">Valores</div>
<svg style="left:37.5px;top:498.4px" width="6" height="8"><path d="M.8 .8L4.2 3.7L.8 6.6" fill="none" stroke="#7a7266" stroke-width="1.3"/></svg>
<div class="t" style="top:512.00px;font-size:8.6px;line-height:20px;color:#d5dbe3;left:59.00px;-webkit-text-stroke:0.15px #d5dbe3;">Depositos bancarios</div>
<svg style="left:37.5px;top:518.4px" width="6" height="8"><path d="M.8 .8L4.2 3.7L.8 6.6" fill="none" stroke="#7a7266" stroke-width="1.3"/></svg>
<div class="t" style="top:532.00px;font-size:8.6px;line-height:20px;color:#d5dbe3;left:59.00px;-webkit-text-stroke:0.15px #d5dbe3;">Debitos y creditos bancarios</div>
<svg style="left:37.5px;top:538.4px" width="6" height="8"><path d="M.8 .8L4.2 3.7L.8 6.6" fill="none" stroke="#7a7266" stroke-width="1.3"/></svg>
<div class="t" style="top:552.00px;font-size:8.6px;line-height:20px;color:#d5dbe3;left:59.00px;-webkit-text-stroke:0.15px #d5dbe3;">Conciliacion de cajas</div>
<svg style="left:37.5px;top:558.4px" width="6" height="8"><path d="M.8 .8L4.2 3.7L.8 6.6" fill="none" stroke="#7a7266" stroke-width="1.3"/></svg>
<div class="t" style="top:572.00px;font-size:8.6px;line-height:20px;color:#d5dbe3;left:59.00px;-webkit-text-stroke:0.15px #d5dbe3;">Conciliacion de bancos</div>
<svg style="left:37.5px;top:578.4px" width="6" height="8"><path d="M.8 .8L4.2 3.7L.8 6.6" fill="none" stroke="#7a7266" stroke-width="1.3"/></svg>
<div class="t" style="top:592.00px;font-size:8.6px;line-height:20px;color:#d5dbe3;left:59.00px;-webkit-text-stroke:0.15px #d5dbe3;">Cheques Diferidos Pendientes</div>
<svg style="left:37.5px;top:598.4px" width="6" height="8"><path d="M.8 .8L4.2 3.7L.8 6.6" fill="none" stroke="#7a7266" stroke-width="1.3"/></svg>
<div class="t" style="top:612.00px;font-size:8.6px;line-height:20px;color:#d5dbe3;left:59.00px;-webkit-text-stroke:0.15px #d5dbe3;">Conciliacion de tarjetas de credito</div>
<svg style="left:37.5px;top:618.4px" width="6" height="8"><path d="M.8 .8L4.2 3.7L.8 6.6" fill="none" stroke="#7a7266" stroke-width="1.3"/></svg>
<div class="t" style="top:632.00px;font-size:8.6px;line-height:20px;color:#d5dbe3;left:59.00px;-webkit-text-stroke:0.15px #d5dbe3;">Cheques pendientes</div>
<svg style="left:37.5px;top:638.4px" width="6" height="8"><path d="M.8 .8L4.2 3.7L.8 6.6" fill="none" stroke="#7a7266" stroke-width="1.3"/></svg>
<div class="t" style="top:652.00px;font-size:8.6px;line-height:20px;color:#d5dbe3;left:59.00px;-webkit-text-stroke:0.15px #d5dbe3;">Cheques no utilizados</div>
<svg style="left:37.5px;top:658.4px" width="6" height="8"><path d="M.8 .8L4.2 3.7L.8 6.6" fill="none" stroke="#7a7266" stroke-width="1.3"/></svg>
<div class="t" style="top:672.00px;font-size:8.6px;line-height:20px;color:#d5dbe3;left:59.00px;-webkit-text-stroke:0.15px #d5dbe3;">Cheques rechazados</div>
<svg style="left:37.5px;top:678.4px" width="6" height="8"><path d="M.8 .8L4.2 3.7L.8 6.6" fill="none" stroke="#7a7266" stroke-width="1.3"/></svg>
<div class="r" style="left:47px;top:692px;width:113px;height:20px;background:#aab7c7;"></div>
<div class="t" style="top:692.00px;font-size:8.6px;line-height:20px;color:#474c53;left:59.00px;-webkit-text-stroke:0.15px #474c53;">Resumenes de Conciliacion</div>
<svg style="left:37.5px;top:698.4px" width="6" height="8"><path d="M.8 .8L4.2 3.7L.8 6.6" fill="none" stroke="#7a7266" stroke-width="1.3"/></svg>
<div class="t" style="top:712.00px;font-size:8.6px;line-height:20px;color:#d5dbe3;left:59.00px;-webkit-text-stroke:0.15px #d5dbe3;">Plazos fijos</div>
<svg style="left:37.5px;top:718.4px" width="6" height="8"><path d="M.8 .8L4.2 3.7L.8 6.6" fill="none" stroke="#7a7266" stroke-width="1.3"/></svg>
</div>
<div class="r" style="left:7px;top:735px;width:153px;height:17px;background:#f1f1f1;"></div>
<div class="r" style="left:24px;top:737px;width:99px;height:13px;background:#c1c1c1;"></div>
<svg style="left:12px;top:740px" width="6" height="8"><path d="M5 0V7.5L0.5 3.75z" fill="#a3a3a3"/></svg>
<svg style="left:150px;top:740px" width="6" height="8"><path d="M0.5 0V7.5L5 3.75z" fill="#505050"/></svg>
<svg style="left:19.5px;top:761px" width="14" height="14" viewBox="0 0 512 512"><path fill="#d9dee6" d="M370.72 133.28C339.458 104.008 298.888 87.962 255.848 88c-77.458.068-144.328 53.178-162.791 126.85-1.344 5.363-6.122 9.15-11.651 9.15H24.103c-7.498 0-13.194-6.807-11.807-14.176C33.933 94.924 134.813 8 256 8c66.448 0 126.791 26.136 171.315 68.685L463.03 40.97C478.149 25.851 504 36.559 504 57.941V192c0 13.255-10.745 24-24 24H345.941c-21.382 0-32.09-25.851-16.971-40.971l41.75-41.749zM32 296h134.059c21.382 0 32.09 25.851 16.971 40.971l-41.75 41.75c31.262 29.273 71.835 45.319 114.876 45.28 77.418-.07 144.315-53.144 162.787-126.849 1.344-5.363 6.122-9.15 11.651-9.15h57.304c7.498 0 13.194 6.807 11.807 14.176C478.067 417.076 377.187 504 256 504c-66.448 0-126.791-26.136-171.315-68.685L48.97 471.03C33.851 486.149 8 475.441 8 454.059V320c0-13.255 10.745-24 24-24z"/></svg>
<div class="t" style="top:758.64px;font-size:12.1px;line-height:20px;color:#d9dee6;left:36.00px;">Recargar menú</div>
</body></html>
